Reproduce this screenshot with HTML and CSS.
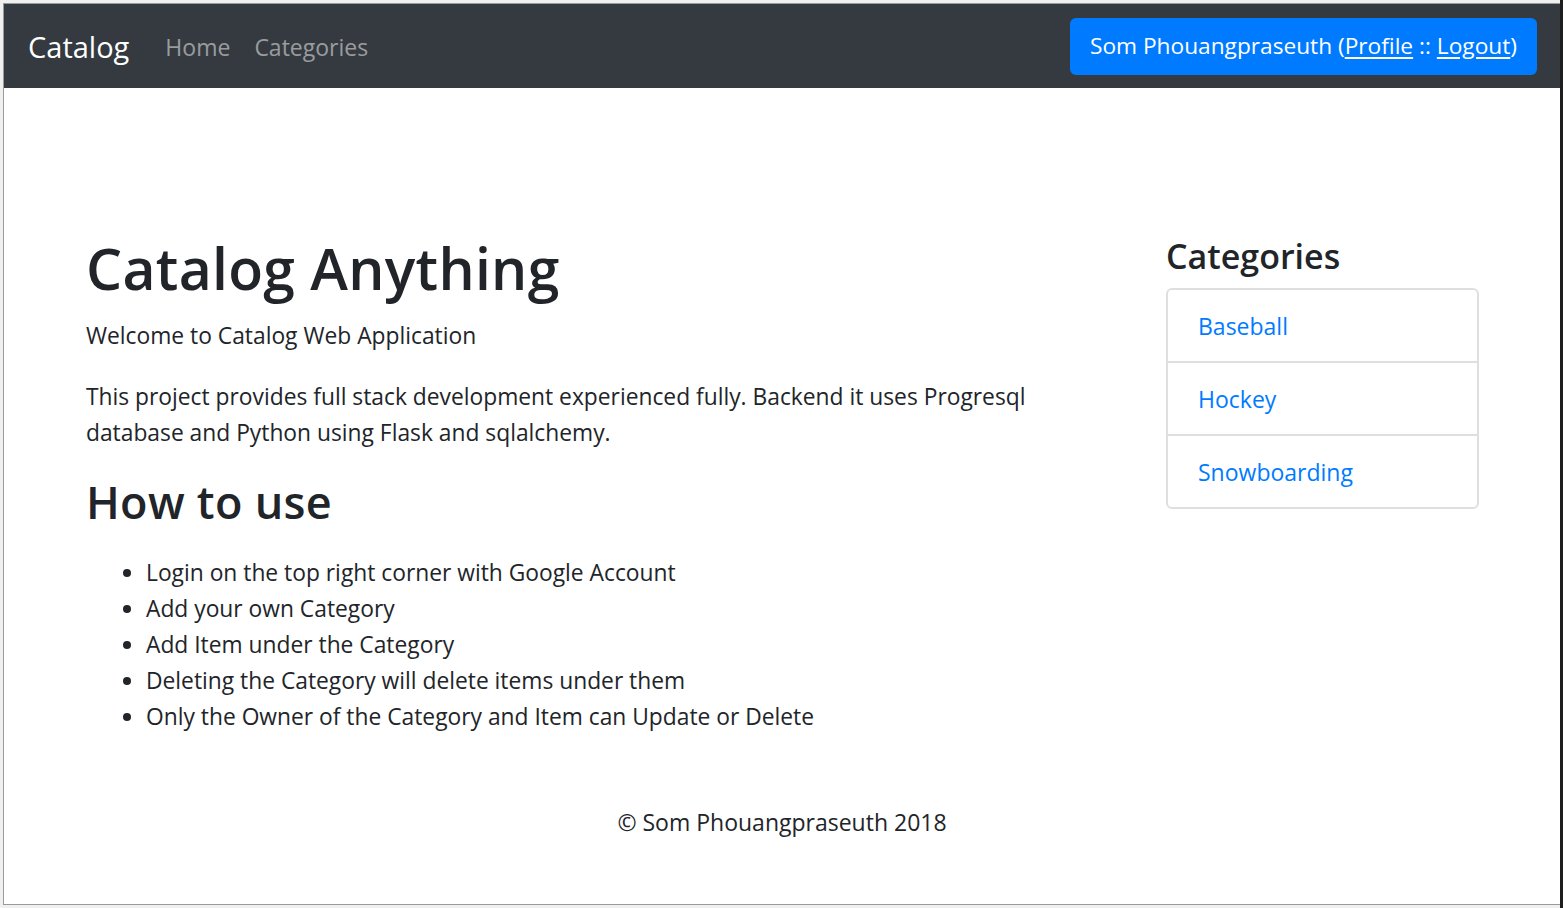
FILE: index.html
```html
<!DOCTYPE html>
<html lang="en">
<head>
<meta charset="utf-8">
<title>Catalog</title>
<link rel="stylesheet" href="styles.css">
</head>
<body>
<div class="screen">
  <div class="window">
    <nav class="navbar">
      <a class="brand" href="#">Catalog</a>
      <ul class="nav">
        <li><a class="nav-link" href="#">Home</a></li>
        <li><a class="nav-link" href="#">Categories</a></li>
      </ul>
      <div class="user-btn">Som Phouangpraseuth (<a href="#">Profile</a> :: <a href="#">Logout</a>)</div>
    </nav>
    <main class="main">
      <section class="content">
        <h1 class="title">Catalog Anything</h1>
        <p class="welcome">Welcome to Catalog Web Application</p>
        <p class="desc">This project provides full stack development experienced fully. Backend it uses Progresql database and Python using Flask and sqlalchemy.</p>
        <h2 class="subtitle">How to use</h2>
        <ul class="steps">
          <li>Login on the top right corner with Google Account</li>
          <li>Add your own Category</li>
          <li>Add Item under the Category</li>
          <li>Deleting the Category will delete items under them</li>
          <li>Only the Owner of the Category and Item can Update or Delete</li>
        </ul>
      </section>
      <aside class="sidebar">
        <h3 class="side-title">Categories</h3>
        <div class="list-group">
          <a class="list-item" href="#">Baseball</a>
          <a class="list-item" href="#">Hockey</a>
          <a class="list-item" href="#">Snowboarding</a>
        </div>
      </aside>
    </main>
    <footer class="footer">© Som Phouangpraseuth 2018</footer>
  </div>
  <div class="strip-right"></div>
</div>
</body>
</html>
```

FILE: styles.css
```css
* { box-sizing: border-box; }
html, body { margin: 0; padding: 0; }
body {
  font-family: "Open Sans", "Noto Sans", "Liberation Sans", sans-serif;
  color: #212529;
  background: #f0f0f0;
}
.screen {
  display: flex;
  width: 1563px;
  height: 908px;
  padding: 3px 0 3px 3px;
  background: #f0f0f0;
  overflow: hidden;
}
.window {
  width: 1557px;
  height: 902px;
  background: #ffffff;
  border: 1px solid #9a9a9a;
  border-right: none;
  display: flex;
  flex-direction: column;
}
.strip-right {
  width: 3px;
  background: #1e1e1e;
  margin-top: -3px;
  margin-bottom: -3px;
}
/* navbar */
.navbar {
  height: 84px;
  flex: none;
  background: #343a40;
  display: flex;
  align-items: center;
  padding: 0 23px 0 24px;
}
.brand {
  font-size: 29px;
  line-height: 44px;
  color: #ffffff;
  text-decoration: none;
  margin-right: 24px;
  margin-top: 2px;
}
.nav {
  list-style: none;
  margin: 2px 0 0 0;
  padding: 0;
  display: flex;
  flex: 1;
}
.nav-link {
  display: block;
  padding: 0 12px;
  font-size: 23px;
  line-height: 36px;
  color: rgba(255, 255, 255, 0.5);
  text-decoration: none;
}
.user-btn {
  height: 57px;
  display: flex;
  align-items: center;
  padding: 0 20px;
  background: #007bff;
  border-radius: 6px;
  color: #ffffff;
  font-size: 22.7px;
  line-height: 36px;
  white-space: pre;
}
.user-btn a {
  color: #ffffff;
  text-decoration: underline;
  text-underline-offset: 3px;
}
/* main */
.main {
  display: grid;
  grid-template-columns: 1fr 313px;
  column-gap: 45px;
  padding: 145px 81px 0 82px;
  align-items: start;
}
.content { padding-top: 3px; }
.title {
  margin: 0 0 18px;
  font-size: 57px;
  line-height: 64px;
  font-weight: 600;
  letter-spacing: 0.3px;
}
.welcome {
  margin: 0 0 25px;
  font-size: 22.8px;
  line-height: 36px;
}
.desc {
  margin: 0 0 24px;
  font-size: 22.8px;
  line-height: 36px;
}
.subtitle {
  margin: 2px 0 27px;
  font-size: 45px;
  line-height: 53px;
  font-weight: 600;
  letter-spacing: 0.3px;
}
.steps {
  margin: 0;
  padding-left: 60px;
  font-size: 22.8px;
  line-height: 36px;
}
.sidebar { padding-top: 1px; }
.side-title {
  margin: 0 0 10px;
  font-size: 34px;
  line-height: 44px;
  font-weight: 600;
}
.list-group {
  display: flex;
  flex-direction: column;
  border: 2px solid #dfdfdf;
  border-radius: 6px;
  overflow: hidden;
}
.list-item {
  display: block;
  padding: 18px 30px 17px;
  font-size: 23px;
  line-height: 36px;
  color: #007bff;
  text-decoration: none;
}
.list-item + .list-item { border-top: 2px solid #dfdfdf; }
/* footer */
.footer {
  margin-top: 69px;
  text-align: center;
  font-size: 23px;
  line-height: 36px;
}
```
